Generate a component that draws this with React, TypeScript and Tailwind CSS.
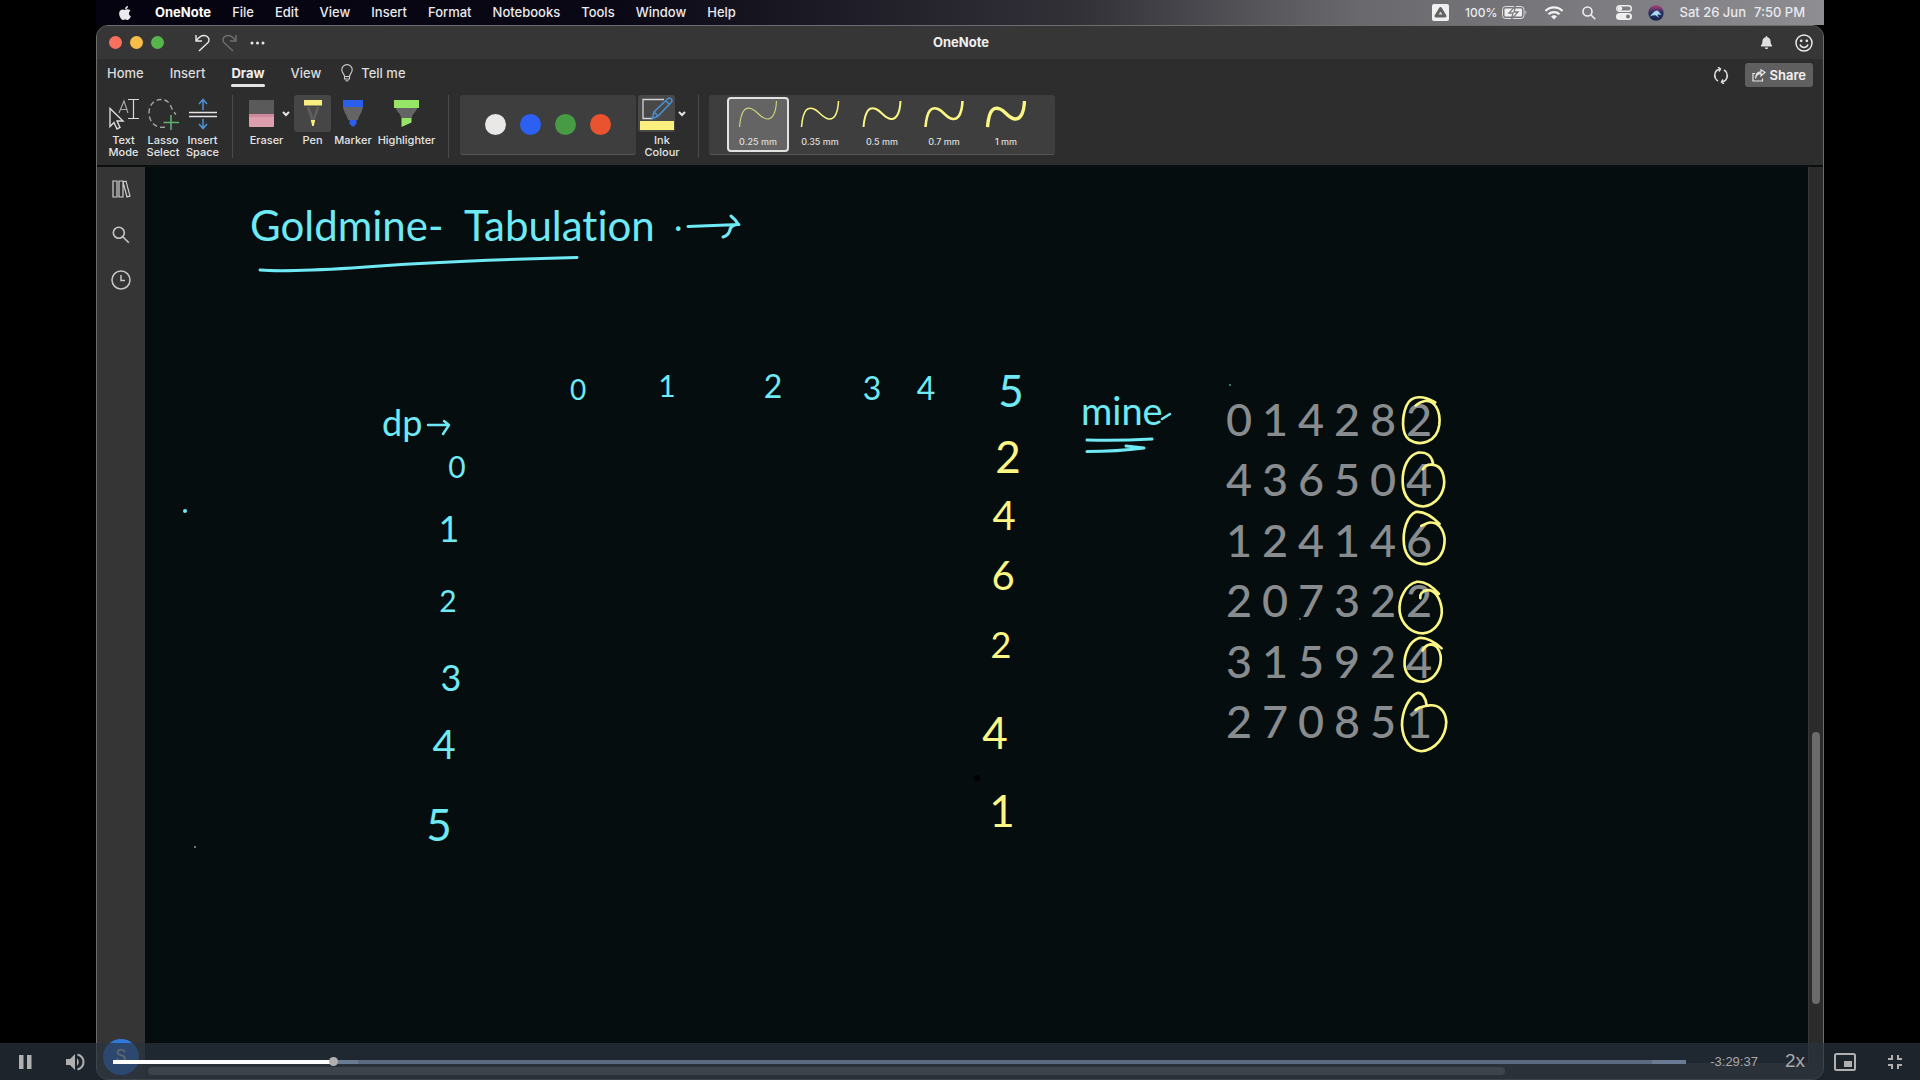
import type { ReactNode } from 'react';
import { FaApple, FaBell } from 'react-icons/fa';

const menus = ['File', 'Edit', 'View', 'Insert', 'Format', 'Notebooks', 'Tools', 'Window', 'Help'];

const mine = [
  [0, 1, 4, 2, 8, 2],
  [4, 3, 6, 5, 0, 4],
  [1, 2, 4, 1, 4, 6],
  [2, 0, 7, 3, 2, 2],
  [3, 1, 5, 9, 2, 4],
  [2, 7, 0, 8, 5, 1],
];

const penWidths = [
  { label: '0.25 mm', stroke: 1.2, selected: true },
  { label: '0.35 mm', stroke: 1.5, selected: false },
  { label: '0.5 mm', stroke: 2, selected: false },
  { label: '0.7 mm', stroke: 2.6, selected: false },
  { label: '1 mm', stroke: 3.4, selected: false },
];

const CYAN = '#6feaf5';
const YELLOW = '#fbf785';

type Ink = { t: string; x: number; y: number; size: number };

const cyanInk: Ink[] = [
  { t: '0', x: 578, y: 400, size: 28 },
  { t: '1', x: 667, y: 397, size: 30 },
  { t: '2', x: 773, y: 398, size: 32 },
  { t: '3', x: 872, y: 400, size: 32 },
  { t: '4', x: 926, y: 400, size: 32 },
  { t: '5', x: 1011, y: 407, size: 44 },
  { t: '0', x: 457, y: 478, size: 30 },
  { t: '1', x: 449, y: 542, size: 36 },
  { t: '2', x: 448, y: 612, size: 30 },
  { t: '3', x: 451, y: 691, size: 36 },
  { t: '4', x: 444, y: 759, size: 40 },
  { t: '5', x: 439, y: 841, size: 44 },
];

const yellowInk: Ink[] = [
  { t: '2', x: 1008, y: 473, size: 44 },
  { t: '4', x: 1004, y: 530, size: 40 },
  { t: '6', x: 1003, y: 590, size: 40 },
  { t: '2', x: 1001, y: 658, size: 36 },
  { t: '4', x: 995, y: 749, size: 44 },
  { t: '1', x: 1002, y: 827, size: 44 },
];

function Chevron() {
  return (
    <svg width="8" height="6" viewBox="0 0 8 6" fill="none" stroke="#e6e6e6" strokeWidth="2">
      <path d="M1 1l3 3 3-3" />
    </svg>
  );
}

function Tool({ label, width, children }: { label: string; width: string; children: ReactNode }) {
  return (
    <button className={`flex flex-col items-center ${width}`}>
      <span className="flex h-[37px] w-full items-center justify-center">{children}</span>
      <span className="mt-0.5 text-center text-[11px] leading-[12px] font-medium text-[#e4e4e4]">{label}</span>
    </button>
  );
}

function Separator() {
  return <div className="h-[63px] w-px shrink-0 bg-[#4a4a4a]" />;
}

function MenuBar() {
  return (
    <header className="flex h-[25px] shrink-0 items-center bg-[linear-gradient(90deg,#05030f_0%,#0a0815_30%,#333138_57%,#69696d_73%,#8e8e92_100%)] pr-[19px] pl-[21px] text-[13px] font-medium text-[#e9e9ee]">
      <FaApple className="mr-[22px] size-4" />
      <nav className="flex items-center gap-[21px]">
        <button className="font-bold text-white">OneNote</button>
        {menus.map((m) => (
          <button key={m}>{m}</button>
        ))}
      </nav>
      <div className="ml-auto flex items-center">
        <svg width="17" height="17" viewBox="0 0 17 17">
          <rect width="17" height="17" rx="2" fill="#f0f0f0" />
          <path d="M8.500 4.500L13 12H4z" fill="#d8d8d8" stroke="#636366" strokeWidth="3" strokeLinejoin="round" />
        </svg>
        <span className="ml-4 text-[12px]">100%</span>
        <svg className="ml-1" width="26" height="14" viewBox="0 0 26 14">
          <rect x="0.500" y="0.500" width="21.500" height="12" rx="3" fill="none" stroke="#e0e0e0" />
          <rect x="2.500" y="2.500" width="17.500" height="8" rx="1" fill="#efefef" />
          <path d="M13.500 0L7 7h4l-1.500 6L16 6h-4z" fill="#fff" stroke="#79797d" strokeWidth="1.300" />
          <path d="M23.500 4.500v4q2-2 0-4z" fill="#d0d0d0" />
        </svg>
        <svg className="ml-4" width="20" height="14" viewBox="0 0 20 14" fill="none" stroke="#f2f2f2" strokeWidth="2.200">
          <path d="M1.500 5a12 12 0 0 1 17 0M4.500 8.300a8 8 0 0 1 11 0" />
          <path d="M7 10.500a4.200 4.200 0 0 1 6 0l-3 3z" fill="#f2f2f2" stroke="none" />
        </svg>
        <svg className="ml-[18px]" width="14" height="14" viewBox="0 0 14 14" fill="none" stroke="#f0f0f0" strokeWidth="1.600">
          <circle cx="5.500" cy="5.500" r="4.500" />
          <path d="M9 9l4.300 4.300" />
        </svg>
        <svg className="ml-5" width="16" height="15" viewBox="0 0 16 15">
          <rect x="0.700" y="0.700" width="14.600" height="5.600" rx="2.800" fill="none" stroke="#efefef" strokeWidth="1.400" />
          <circle cx="4" cy="3.500" r="2.200" fill="#efefef" />
          <rect x="0" y="8" width="16" height="7" rx="3.500" fill="#efefef" />
          <circle cx="12" cy="11.500" r="2" fill="#77777b" />
        </svg>
        <svg className="ml-4" width="16" height="16" viewBox="0 0 16 16">
          <defs>
            <linearGradient id="siri" x1="0" y1="0" x2="0" y2="1">
              <stop offset="0" stopColor="#b03c74" />
              <stop offset="0.450" stopColor="#2e2f66" />
              <stop offset="1" stopColor="#12234a" />
            </linearGradient>
          </defs>
          <circle cx="8" cy="8" r="7.700" fill="url(#siri)" />
          <path d="M2 11.500C4 9 6 6 9 5.500c2 .5 3 3 4.500 4.500-2-.5-3-.8-4 0l1.500 3-3-2.500c-2-.5-4 .2-6 1z" fill="#a8dcf3" />
        </svg>
        <span className="ml-4">Sat 26 Jun</span>
        <span className="ml-2">7:50 PM</span>
      </div>
    </header>
  );
}

function TitleBar() {
  return (
    <div className="grid h-[33px] shrink-0 grid-cols-3 items-center bg-[#363636] pr-[10px] pl-3">
      <div className="flex items-center">
        <div className="flex gap-2">
          <button aria-label="Close" className="size-[13px] rounded-full bg-[#f9705f]" />
          <button aria-label="Minimise" className="size-[13px] rounded-full bg-[#f8bc48]" />
          <button aria-label="Zoom" className="size-[13px] rounded-full bg-[#57b64b]" />
        </div>
        <button aria-label="Undo" className="ml-[31px]">
          <svg width="15" height="18" viewBox="0 0 15 18" fill="none" stroke="#e8e8e8" strokeWidth="1.400">
            <path d="M1 1v6h6M1.300 6.700C3.500 3.500 6 1.500 9 1.500c4 0 6.500 4 3.800 7.300L4 17" />
          </svg>
        </button>
        <button aria-label="Redo" className="ml-3">
          <svg width="15" height="18" viewBox="0 0 15 18" fill="none" stroke="#6e6e6e" strokeWidth="1.400">
            <path d="M14 1v6H8M13.700 6.700C11.500 3.500 9 1.500 6 1.500c-4 0-6.500 4-3.800 7.300L11 17" />
          </svg>
        </button>
        <button aria-label="More" className="ml-[13px]">
          <svg width="15" height="4" viewBox="0 0 15 4" fill="#e8e8e8">
            <circle cx="2" cy="2" r="1.500" />
            <circle cx="7.500" cy="2" r="1.500" />
            <circle cx="13" cy="2" r="1.500" />
          </svg>
        </button>
      </div>
      <h1 className="text-center text-[13px] font-bold text-[#efefef]">OneNote</h1>
      <div className="flex items-center justify-end gap-[22px]">
        <button aria-label="Notifications">
          <FaBell className="size-[13px] text-[#e0e0e0]" />
        </button>
        <button aria-label="Feedback">
          <svg width="18" height="18" viewBox="0 0 18 18" fill="none" stroke="#e8e8e8" strokeWidth="1.500">
            <circle cx="9" cy="9" r="8" />
            <path d="M5 10.500a4.200 4.200 0 0 0 8 0" />
            <circle cx="6.200" cy="6.800" r="0.600" fill="#e8e8e8" />
            <circle cx="11.800" cy="6.800" r="0.600" fill="#e8e8e8" />
          </svg>
        </button>
      </div>
    </div>
  );
}

function Tab({ label, active = false }: { label: string; active?: boolean }) {
  return (
    <button className="flex flex-col">
      <span className={active ? 'font-bold text-[#f0f0f0]' : ''}>{label}</span>
      {active && <span className="mt-[3px] h-[3px] w-full rounded-sm bg-[#e4e4e4]" />}
    </button>
  );
}

function Ribbon() {
  return (
    <div className="shrink-0 bg-[#2d2d2d]">
      <div className="flex h-[35px] items-start pr-[10px] pl-[10px] text-[13px] leading-[16px] font-medium text-[#dcdcdc]">
        <div className="flex gap-[26px] pt-[6px]">
          <Tab label="Home" />
          <Tab label="Insert" />
          <Tab label="Draw" active />
          <Tab label="View" />
        </div>
        <button className="ml-5 flex items-center gap-2 pt-[5px]">
          <svg width="12" height="18" viewBox="0 0 12 18" fill="none" stroke="#d0d0d0" strokeWidth="1.100">
            <path d="M3.500 12.500C3.500 10 .8 9 .8 5.800a5.200 5.200 0 0 1 10.400 0C11.200 9 8.500 10 8.500 12.500zM3.500 12.500v2.500h5v-2.500M4.500 16.800h3" />
          </svg>
          Tell me
        </button>
        <button aria-label="Sync" className="mt-2 ml-auto">
          <svg width="16" height="17" viewBox="0 0 16 17" fill="none" stroke="#dedede" strokeWidth="1.500">
            <path d="M7 2C2.500 2.500.5 7.500 2.500 11.500c.6 1.200 1.400 1.900 2.500 2.500M9 15c4.500-.5 6.500-5.500 4.500-9.500C12.900 4.300 12.100 3.600 11 3" />
            <path d="M5 0l2.500 2L6 4.500M11 17l-2.500-2L10 12.500" />
          </svg>
        </button>
        <button className="mt-1 ml-4 flex h-6 items-center gap-1 rounded-[3px] bg-[#5f5f5f] px-[7px] text-[13px] font-semibold text-[#f2f2f2]">
          <svg width="14" height="13" viewBox="0 0 14 13" fill="none" stroke="#e6e6e6" strokeWidth="1.200">
            <path d="M3 4.500H1V12h9.500V9.500M3.500 9.500C4 6 6 4.500 9 4.300V7l4-3.700L9 .8v2C5.500 3 3.500 5.500 3.500 9.500z" />
          </svg>
          Share
        </button>
      </div>

      <div className="flex h-[71px] items-start pt-px pl-[7px]">
        <Tool label="Text Mode" width="w-[39px]">
          <svg width="32" height="32" viewBox="0 0 32 32" fill="none" stroke="#dadada" strokeWidth="1.200">
            <path d="M2 10.500v18l4-4 3 6.500 3-1.500-3-6.500h6z" strokeWidth="1.400" />
            <path d="M11 15l5-12 4 12M12.500 11.500h6" stroke="#a8a8a8" />
            <path d="M20 1.500h11M20 20.500h11M25.500 1.500v19" />
          </svg>
        </Tool>
        <Tool label="Lasso Select" width="w-10">
          <svg width="32" height="32" viewBox="0 0 32 32" fill="none">
            <path d="M18 29C9 31 2 24 2 15S8 1.500 14 1.500s9 4 10 7 3 6 5 8" stroke="#a4a4a4" strokeWidth="1.400" strokeDasharray="5 3" />
            <path d="M24 17v15M16.500 24.500h15.500" stroke="#5fae72" strokeWidth="1.600" />
          </svg>
        </Tool>
        <Tool label="Insert Space" width="w-[39px]">
          <svg width="30" height="32" viewBox="0 0 30 32" fill="none">
            <path d="M1 14.500h28M1 18.500h28" stroke="#e4e4e4" strokeWidth="1.400" />
            <path d="M15 12V1.500M11 6l4-4.500L19 6M15 21v9.500M11 26l4 4.500 4-4.500" stroke="#4d94d8" strokeWidth="1.500" />
          </svg>
        </Tool>
        <div className="ml-[10px]">
          <Separator />
        </div>
        <div className="ml-[10px]">
          <Tool label="Eraser" width="w-[47px]">
            <span className="flex items-center gap-2 pl-[6px]">
              <svg width="25" height="27" viewBox="0 0 25 27">
                <rect width="25" height="15" fill="#5a5a5a" />
                <rect y="14" width="25" height="13" rx="1" fill="#dd9fae" />
                <rect y="14" width="25" height="3" fill="#cf8a9c" />
              </svg>
              <Chevron />
            </span>
          </Tool>
        </div>
        <div className="ml-1">
          <Tool label="Pen" width="w-[37px]">
            <span className="flex size-full items-center justify-center rounded-[3px] bg-[#464646]">
              <svg width="18" height="27" viewBox="0 0 18 27">
                <path d="M2.500 7h13L11 20H7z" fill="#5e5e5e" />
                <path d="M5.500 7h7L9.500 18z" fill="#4b4b4b" />
                <rect width="18" height="5.500" fill="#f8ee80" />
                <path d="M6.800 20h4.400l-1.400 6H8.200z" fill="#f8ee80" />
              </svg>
            </span>
          </Tool>
        </div>
        <Tool label="Marker" width="w-11">
          <svg width="20" height="27" viewBox="0 0 20 27">
            <path d="M0 7h20c-1 6-4 8-5 13H5C4 15 1 13 0 7z" fill="#646464" />
            <rect width="20" height="7" fill="#2a5fee" />
            <path d="M6.500 20h7v3.500L11 26.500H9L6.500 23.500z" fill="#2a5fee" />
          </svg>
        </Tool>
        <Tool label="Highlighter" width="w-[63px]">
          <svg width="25" height="27" viewBox="0 0 25 27">
            <path d="M2 8h21c0 4-5 5-5 10H7c0-5-5-6-5-10z" fill="#646464" />
            <rect width="25" height="8" fill="#97e566" />
            <path d="M7.500 18h10v4.500L7.500 27z" fill="#97e566" />
          </svg>
        </Tool>
        <div className="ml-[10px]">
          <Separator />
        </div>
        <div className="ml-[11px] flex h-[60px] w-[176px] items-center justify-center gap-[14px] rounded-[3px] border-b border-[#555555] bg-[#3e3e3e]">
          <button aria-label="White ink" className="size-[21px] rounded-full bg-[#e9e8e6]" />
          <button aria-label="Blue ink" className="size-[21px] rounded-full bg-[#2b60f2]" />
          <button aria-label="Green ink" className="size-[21px] rounded-full bg-[#479b44]" />
          <button aria-label="Red ink" className="size-[21px] rounded-full bg-[#e9532f]" />
        </div>
        <div className="ml-0.5">
          <Tool label="Ink Colour" width="w-12">
            <span className="flex w-full items-center gap-[3px]">
              <span className="flex h-[37px] w-[37px] flex-col items-center justify-end rounded-[3px] bg-[#484848]">
                <svg width="32" height="24" viewBox="0 0 32 24" fill="none">
                  <path d="M23 2.500H2v19h9" stroke="#d4d4d4" strokeWidth="1.300" />
                  <path d="M11 22l2-7L27 1.500c2-1.500 5 1 3.500 3.500L17 19zM13 15l4 4M25 4l3.500 3.500" stroke="#4b8ecb" strokeWidth="1.600" />
                </svg>
                <span className="mb-0.5 h-[9px] w-[34px] bg-[#fbf07f]" />
              </span>
              <Chevron />
            </span>
          </Tool>
        </div>
        <div className="ml-3">
          <Separator />
        </div>
        <div className="ml-[10px] flex h-[60px] w-[346px] items-center rounded-[3px] border-b border-[#555555] bg-[#3e3e3e] pl-[18px]">
          {penWidths.map((p) => (
            <button
              key={p.label}
              className={`flex h-[55px] w-[62px] flex-col items-center rounded-[4px] border-2 ${p.selected ? 'border-[#e2e2e2] bg-[#646464]' : 'border-transparent'}`}
            >
              <svg className="mt-px" width="40" height="28" viewBox="0 0 40 28" fill="none" stroke={p.selected ? '#cfd07c' : YELLOW} strokeWidth={p.stroke}>
                <path d="M1.500 27C3 9 8 6.500 14 9c6 2.500 8 9 15 10 6 .5 9-7 9.500-18" />
              </svg>
              <span className="mt-2 text-[9px] leading-[12px] font-medium text-[#dedede]">{p.label}</span>
            </button>
          ))}
        </div>
      </div>
    </div>
  );
}

function SideNav() {
  return (
    <nav className="flex w-12 shrink-0 flex-col items-center bg-[#353535] pt-[13px]">
      <button aria-label="Notebooks">
        <svg width="19" height="18" viewBox="0 0 19 18" fill="none" stroke="#cfcfcf" strokeWidth="1.200">
          <path d="M1 1h4v16H1zM7 1h4v16H7zM11 2l3-.8L18 16l-3 .9z" />
        </svg>
      </button>
      <button aria-label="Search" className="mt-7">
        <svg width="18" height="18" viewBox="0 0 18 18" fill="none" stroke="#c8c8c8" strokeWidth="1.600">
          <circle cx="6.800" cy="6.800" r="5.500" />
          <path d="M10.800 10.800l6 6" />
        </svg>
      </button>
      <button aria-label="Recent" className="mt-[26px]">
        <svg width="20" height="20" viewBox="0 0 20 20" fill="none" stroke="#c8c8c8" strokeWidth="1.500">
          <circle cx="10" cy="10" r="9" />
          <path d="M10 5v5.500h4" />
        </svg>
      </button>
      <button className="mt-auto mb-1 size-9 rounded-full bg-[#2f78dc] text-[17px] text-[#e2e2e2]">S</button>
    </nav>
  );
}

function InkText({ items, color }: { items: Ink[]; color: string }) {
  return (
    <g fill={color} textAnchor="middle">
      {items.map((i) => (
        <text key={`${i.t}-${i.x}-${i.y}`} x={i.x} y={i.y} fontSize={i.size}>
          {i.t}
        </text>
      ))}
    </g>
  );
}

function Page() {
  return (
    <main className="relative min-w-0 flex-1 overflow-hidden bg-[#050d0e] font-['Lato','Noto_Sans',sans-serif] [font-variant-ligatures:none]">
      <table className="absolute top-[222px] left-[1076px] h-[363px] text-[45px] leading-none font-medium text-[#898c8e]">
        <tbody>
          {mine.map((row, r) => (
            <tr key={r}>
              {row.map((n, c) => (
                <td key={c} className="w-9 p-0 text-center">
                  {n}
                </td>
              ))}
            </tr>
          ))}
        </tbody>
      </table>

      <svg className="absolute inset-0 size-full" fill="none" strokeLinecap="round" strokeLinejoin="round">
        <g transform="translate(-145 -167)">
          <g fill={CYAN}>
            <text x="250" y="241" fontSize="42">Goldmine-</text>
            <text x="464" y="241" fontSize="42">Tabulation</text>
            <text x="674" y="231" fontSize="36">.</text>
            <text x="382" y="436" fontSize="36">dp</text>
            <text x="1081" y="425" fontSize="38">mine</text>
          </g>
          <InkText items={cyanInk} color={CYAN} />
          <InkText items={yellowInk} color={YELLOW} />

          <g stroke={CYAN} strokeWidth="3">
            <path d="M260 270q25 2 92-2 90-7 225-10.500" />
            <path d="M688 226.500l51-2M731 216q5 4 7 8-8 2-8 6-2 6-7 7" />
            <path d="M428 425h20M444 421l5 4q-4 6-6 9" strokeWidth="2.500" />
            <path d="M1162 419l8-5" strokeWidth="2.500" />
            <path d="M1087 440q30 1 65-1M1087 451.500q30 0 57-3.500l-18-2" />
          </g>

          <g transform="translate(1060 370) scale(0.333)" stroke={YELLOW} strokeWidth="8">
            <path d="M1127 97C1095 78 1055 72 1040 108c-12 30-17 80 8 101 34 22 84 8 91-44 5-46-16-75-43-72-14 2-22 8-28 14" />
            <path d="M1120 280c-4-24-22-34-44-32-30 8-48 44-47 88 1 46 26 72 62 74 38-4 62-38 63-74-2-36-18-52-40-52-14 0-20 6-24 14" />
            <path d="M1140 462c-22-22-48-38-70-36-28 10-42 58-37 98 4 36 28 60 66 59 38-6 57-36 56-76-4-34-22-50-44-49-12 2-20 8-26 10" />
            <path d="M1138 672c-20-22-44-38-66-36-34 8-56 50-52 90 6 38 34 64 70 65 38-4 60-40 56-76-6-36-24-56-42-54-16 2-24 12-22 24" />
            <path d="M1146 836c-20-20-48-34-68-31-28 10-46 46-43 84 4 30 26 48 56 47 36-6 56-44 52-78-4-22-16-34-30-34-14 2-20 10-24 18" />
            <path d="M1101 1008c-2-24-14-40-28-38-24 10-46 52-46 96 2 46 26 76 58 79 42-4 74-44 75-88-2-36-24-52-50-50-20 2-34 8-42 14" />
          </g>

          <circle cx="185" cy="511" r="2" fill={CYAN} />
          <circle cx="1230" cy="385" r="1" fill="#3f9c9c" />
          <circle cx="195" cy="847" r="1" fill="#8a9a9a" />
          <circle cx="1300" cy="619" r="1" fill="#6b7070" />
          <circle cx="977" cy="778" r="3" fill="#000000" />
        </g>
      </svg>
    </main>
  );
}

function PlayerBar() {
  return (
    <div className="absolute inset-x-0 bottom-0 flex h-[37px] items-center bg-[rgba(43,51,63,0.7)] font-['Liberation_Sans',sans-serif] text-[#a9a9a9]">
      <button aria-label="Pause" className="ml-[19px]">
        <svg width="13" height="14" viewBox="0 0 13 14" fill="#b0b0b0">
          <path d="M0 0h4.500v14H0zM8 0h4.500v14H8z" />
        </svg>
      </button>
      <button aria-label="Mute" className="ml-[34px]">
        <svg width="19" height="18" viewBox="0 0 19 18" fill="#b0b0b0">
          <path d="M0 6h4l5-5v16l-5-5H0zM11 5q3.500 4 0 8z" />
          <path d="M11.500 1.500c8 2.500 8 12.500 0 15" fill="none" stroke="#b0b0b0" strokeWidth="2" />
        </svg>
      </button>
      <div className="ml-7 flex h-1 flex-1 items-center bg-[#5d6b80]">
        <div className="h-full w-[14%] bg-white" />
        <div className="-ml-1 size-[9px] rounded-full bg-[#b0b0b0]" />
        <div className="h-full w-5 bg-[#6b7b93]" />
        <div className="ml-auto h-full w-[34px] bg-[#6b7b93]" />
      </div>
      <span className="ml-6 text-[13px]">-3:29:37</span>
      <button className="ml-[27px] text-[19px]">2x</button>
      <button aria-label="Picture in picture" className="ml-[29px]">
        <svg width="22" height="18" viewBox="0 0 22 18">
          <rect x="1" y="1" width="20" height="16" rx="1.500" fill="none" stroke="#b0b0b0" strokeWidth="2" />
          <rect x="10" y="8" width="8" height="6" fill="#b0b0b0" />
        </svg>
      </button>
      <button aria-label="Exit full screen" className="mr-[18px] ml-8">
        <svg width="14" height="14" viewBox="0 0 14 14" fill="none" stroke="#b0b0b0" strokeWidth="2">
          <path d="M0 4h4V0M10 0v4h4M14 10h-4v4M4 14v-4H0" />
        </svg>
      </button>
    </div>
  );
}

export default function App() {
  return (
    <div className="relative flex h-screen flex-col bg-black px-24 font-['Inter',sans-serif]">
      <MenuBar />
      <div className="flex min-h-0 flex-1 flex-col bg-black">
        <div className="flex min-h-0 flex-1 flex-col overflow-hidden rounded-xl border border-[#6c6c6c] bg-[#2d2d2d]">
          <TitleBar />
          <Ribbon />
          <div className="h-[2px] shrink-0 bg-[#0b0f0f]" />
          <div className="flex min-h-0 flex-1">
            <SideNav />
            <div className="flex min-w-0 flex-1 flex-col">
              <div className="flex min-h-0 flex-1">
                <Page />
                <div className="flex w-[15px] shrink-0 flex-col items-center border-l border-[#3a3a3a] bg-[#2b2b2b]">
                  <div className="flex-[565]" />
                  <div className="w-2 flex-[272] rounded-full bg-[#6b6b6b]" />
                  <div className="flex-[59]" />
                </div>
              </div>
              <div className="flex h-4 items-center bg-[#2d2d2d] pl-[3px]">
                <div className="h-2 w-[81%] rounded-full bg-[#6b6b6b]" />
              </div>
            </div>
          </div>
        </div>
      </div>
      <PlayerBar />
    </div>
  );
}
